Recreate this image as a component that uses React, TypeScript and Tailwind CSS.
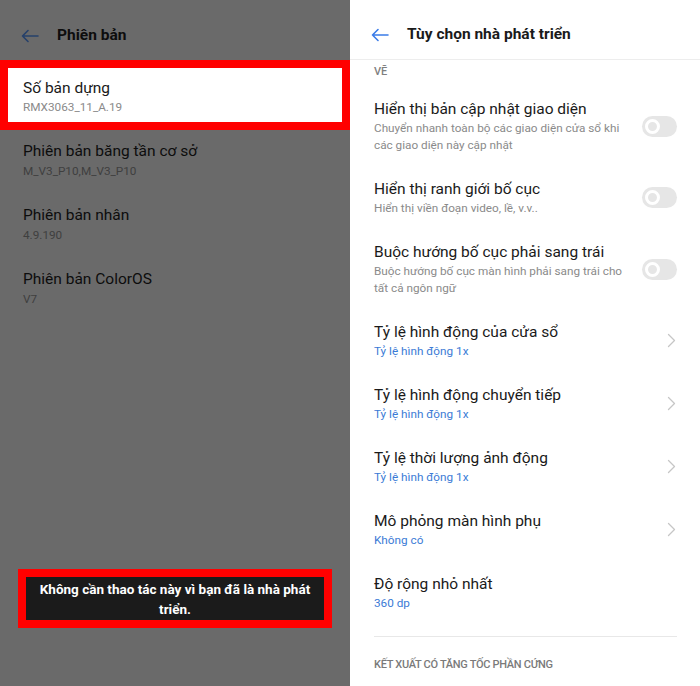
const FIRMWARE_ROWS = [
  { title: "Phiên bản băng tần cơ sở", value: "M_V3_P10,M_V3_P10" },
  { title: "Phiên bản nhân", value: "4.9.190" },
  { title: "Phiên bản ColorOS", value: "V7" },
] as const;

const TOGGLE_ROWS = [
  {
    title: "Hiển thị bản cập nhật giao diện",
    desc: "Chuyển nhanh toàn bộ các giao diện cửa sổ khi các giao diện này cập nhật",
  },
  { title: "Hiển thị ranh giới bố cục", desc: "Hiển thị viền đoạn video, lề, v.v.." },
  {
    title: "Buộc hướng bố cục phải sang trái",
    desc: "Buộc hướng bố cục màn hình phải sang trái cho tất cả ngôn ngữ",
  },
] as const;

const LINK_ROWS = [
  { title: "Tỷ lệ hình động của cửa sổ", value: "Tỷ lệ hình động 1x", chevron: true },
  { title: "Tỷ lệ hình động chuyển tiếp", value: "Tỷ lệ hình động 1x", chevron: true },
  { title: "Tỷ lệ thời lượng ảnh động", value: "Tỷ lệ hình động 1x", chevron: true },
  { title: "Mô phỏng màn hình phụ", value: "Không có", chevron: true },
  { title: "Độ rộng nhỏ nhất", value: "360 dp", chevron: false },
] as const;

function BackArrow({ color }: { color: string }) {
  return (
    <svg width="18" height="14" viewBox="0 0 18 14" fill="none">
      <path
        d="M17 7H1.5M7 1.5L1.5 7L7 12.5"
        stroke={color}
        strokeWidth="1.6"
        strokeLinecap="round"
        strokeLinejoin="round"
      />
    </svg>
  );
}

function Chevron() {
  return (
    <svg width="9" height="15" viewBox="0 0 9 15" fill="none" className="shrink-0 mr-[1px]">
      <path d="M1.5 1.5L7.5 7.5L1.5 13.5" stroke="#c6c6c6" strokeWidth="1.3" strokeLinecap="round" strokeLinejoin="round" />
    </svg>
  );
}

function Toggle() {
  return (
    <div className="w-[35px] h-[21px] rounded-full bg-[#e6e6e6] flex items-center pl-[3px] shrink-0">
      <div className="w-[15px] h-[15px] rounded-full border-[3px] border-white bg-[#e6e6e6]" />
    </div>
  );
}

export default function App() {
  return (
    <main
      className="flex w-[700px] h-[686px] overflow-hidden"
      style={{ fontFamily: "Roboto, 'Noto Sans', sans-serif" }}
    >
      {/* dimmed "Phiên bản" screen */}
      <section className="w-[350px] h-full bg-[#6a6a6a] flex flex-col">
        <header className="h-[60px] pt-[11px] flex items-center pl-[21px] gap-[18px]">
          <BackArrow color="#26416b" />
          <h1 className="text-[15.5px] font-bold text-[#0d0d0d]">Phiên bản</h1>
        </header>

        <div className="border-[8px] border-[#ff0000] bg-white pl-[15px] pt-[9px] pb-[6px]">
          <p className="text-[15.5px] leading-[22px] text-[#1a1a1a]">Số bản dựng</p>
          <p className="text-[11.75px] leading-[17px] text-[#8a8a8a]">RMX3063_11_A.19</p>
        </div>

        {FIRMWARE_ROWS.map((row) => (
          <div key={row.title} className="pl-[23px] pt-[10px] pb-[14px]">
            <p className="text-[15.5px] leading-[22px] text-[#0d0d0d]">{row.title}</p>
            <p className="text-[11.75px] leading-[17px] mt-[1px] text-[#3f3f3f]">{row.value}</p>
          </div>
        ))}

        <div className="flex-1" />

        <div className="mx-[18px] mb-[58px] border-[8px] border-[#ff0000] bg-[#1b1b1b] px-[8px] pt-[2px] pb-[1px]">
          <p className="text-center text-white font-bold text-[13.5px] leading-[20px]">
            Không cần thao tác này vì bạn đã là nhà phát triển.
          </p>
        </div>
      </section>

      {/* developer options screen */}
      <section className="w-[350px] h-full bg-white flex flex-col">
        <header className="h-[60px] pt-[11px] flex items-center pl-[21px] gap-[18px] border-b border-[#ededed]">
          <BackArrow color="#3b7ce8" />
          <h1 className="text-[15.5px] font-bold text-[#1a1a1a]">Tùy chọn nhà phát triển</h1>
        </header>

        <div className="pl-[24px] pr-[23px]">
          <p className="pt-[5px] pb-[7px] text-[11px] leading-[14px] font-medium text-[#7f7f7f]">VẼ</p>

          {TOGGLE_ROWS.map((row) => (
            <div key={row.title} className="flex items-center justify-between py-[12px]">
              <div className="max-w-[256px]">
                <p className="text-[15.5px] leading-[22px] text-[#1a1a1a]">{row.title}</p>
                <p className="text-[11.75px] leading-[17px] text-[#8a8a8a]">{row.desc}</p>
              </div>
              <Toggle />
            </div>
          ))}

          {LINK_ROWS.map((row) => (
            <div key={row.title} className="flex items-center justify-between py-[12px]">
              <div>
                <p className="text-[15.5px] leading-[22px] text-[#1a1a1a]">{row.title}</p>
                <p className="text-[11.75px] leading-[17px] text-[#3b7bd6]">{row.value}</p>
              </div>
              {row.chevron && <Chevron />}
            </div>
          ))}

          <div className="mt-[12px] border-t border-[#e8e8e8]" />
          <p className="pt-[21px] text-[11px] leading-[14px] font-medium tracking-[-0.3px] text-[#7a7a7a]">
            KẾT XUẤT CÓ TĂNG TỐC PHẦN CỨNG
          </p>
        </div>
      </section>
    </main>
  );
}
